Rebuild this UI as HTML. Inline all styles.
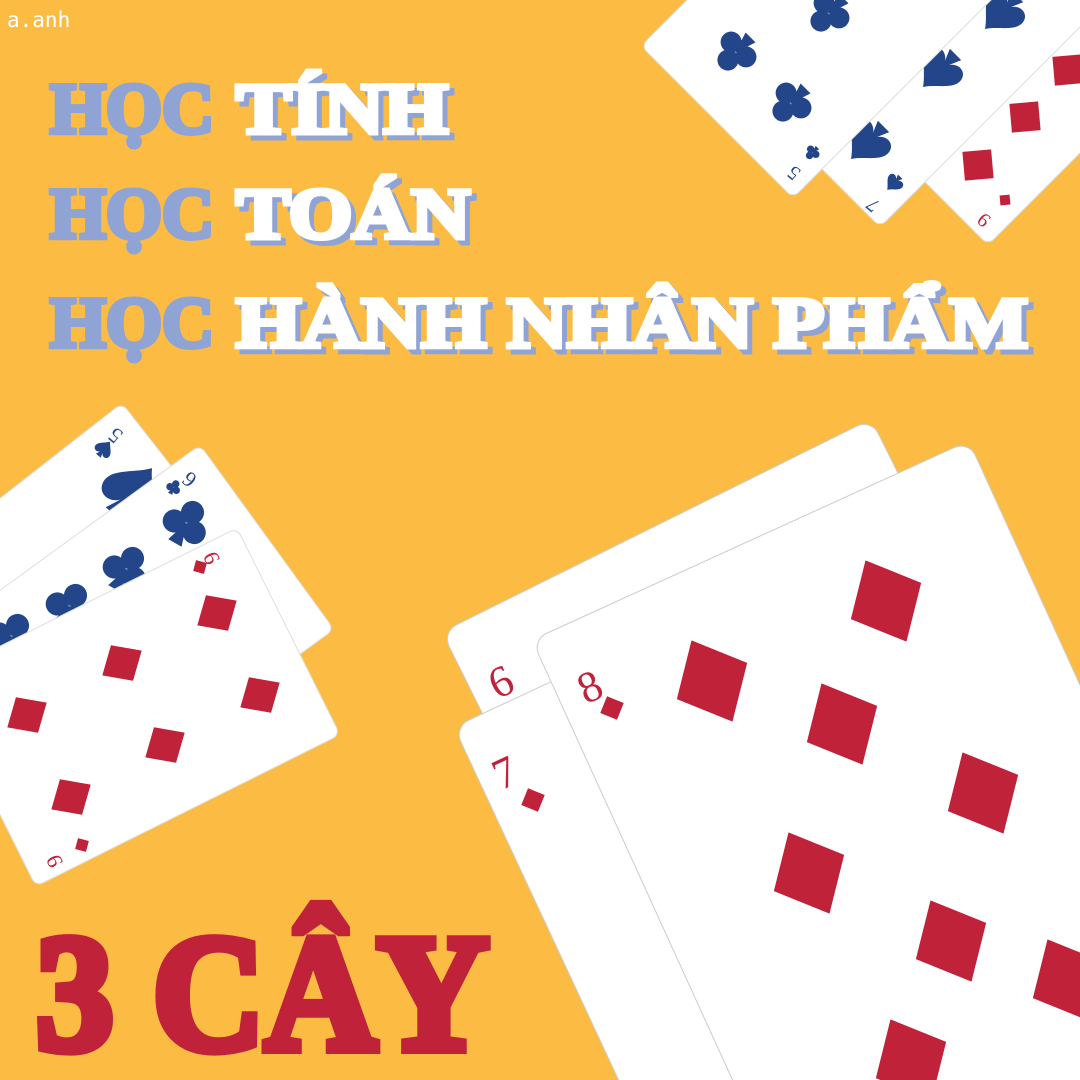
<!DOCTYPE html>
<html><head><meta charset="utf-8"><style>
html,body{margin:0;padding:0;background:#fcbc44;width:1080px;height:1080px;overflow:hidden;}
svg{display:block}
</style></head><body>
<svg width="1080" height="1080" viewBox="0 0 1080 1080" xmlns="http://www.w3.org/2000/svg" overflow="hidden">
<defs>
<clipPath id="cp"><rect width="1080" height="1080"/></clipPath>
<g id="club"><circle cx="0" cy="-10" r="10.5"/><circle cx="-10.5" cy="5" r="10.5"/><circle cx="10.5" cy="5" r="10.5"/><path d="M0,0 L-7,22 L7,22 Z"/></g>
<path id="spade" d="M0,-24 C8,-12 24,-4 22,8 C20,18 8,18 3,10 L8,22 L-8,22 L-3,10 C-8,18 -20,18 -22,8 C-24,-4 -8,-12 0,-24 Z"/>
<rect id="dia" x="-20" y="-20" width="40" height="40"/>
</defs>
<g clip-path="url(#cp)">
<rect width="1080" height="1080" fill="#fcbc44"/>

<rect transform="translate(988,245) rotate(-135)" width="215" height="340" rx="8" fill="#fff" stroke="#ddd"/>
<g fill="#c0223a">
<use href="#dia" transform="translate(1068,70) rotate(-5) scale(0.72)"/>
<use href="#dia" transform="translate(1025,117) rotate(-5) scale(0.72)"/>
<use href="#dia" transform="translate(978,165) rotate(-5) scale(0.72)"/>
<use href="#dia" transform="translate(1005,200) rotate(-5) scale(0.25)"/>
<text font-family="Liberation Serif" font-size="20" transform="translate(988,215) rotate(-140)" text-anchor="middle">9</text>
</g>
<rect transform="translate(880,227) rotate(-135)" width="215" height="340" rx="8" fill="#fff" stroke="#ddd"/>
<g fill="#23468a">
<use href="#spade" transform="translate(940,70) rotate(-135)"/>
<use href="#spade" transform="translate(868,142) rotate(-135)"/>
<use href="#spade" transform="translate(1002,12) rotate(-135)"/>
<use href="#spade" transform="translate(894,183) rotate(-135) scale(0.4)"/>
<text font-family="Liberation Serif" font-size="20" transform="translate(877,200) rotate(-140)" text-anchor="middle">7</text>
</g>
<rect transform="translate(793,198) rotate(-135)" width="215" height="340" rx="8" fill="#fff" stroke="#ddd"/>
<g fill="#23468a">
<use href="#club" transform="translate(735,53) rotate(-135)"/>
<use href="#club" transform="translate(790,104) rotate(-135)"/>
<use href="#club" transform="translate(828,14) rotate(-135)"/>
<use href="#club" transform="translate(812,153) rotate(-135) scale(0.35)"/>
<text font-family="Liberation Serif" font-size="20" transform="translate(798,168) rotate(-140)" text-anchor="middle">5</text>
</g>

<rect transform="translate(122,403) rotate(52)" width="230" height="340" rx="8" fill="#fff" stroke="#ddd"/>
<g fill="#23468a">
<use href="#spade" transform="translate(132,492) rotate(40) scale(1.3)"/>
<use href="#spade" transform="translate(104,449) rotate(40) scale(0.4)"/>
<text font-family="Liberation Serif" font-size="22" transform="translate(120,430) rotate(-140)" text-anchor="middle">5</text>
</g>
<rect transform="translate(200,445) rotate(54)" width="228" height="340" rx="8" fill="#fff" stroke="#ddd"/>
<g fill="#23468a">
<use href="#club" transform="translate(187,522) rotate(30) scale(1.1)"/>
<use href="#club" transform="translate(127,568) rotate(30) scale(1.1)"/>
<use href="#club" transform="translate(70,605) rotate(30) scale(1.1)"/>
<use href="#club" transform="translate(12,635) rotate(30) scale(1.1)"/>
<use href="#club" transform="translate(174,487) rotate(30) scale(0.35)"/>
<text font-family="Liberation Serif" font-size="22" transform="translate(194,474) rotate(-140)" text-anchor="middle">6</text>
</g>
<rect transform="translate(237,528) rotate(63.5)" width="231" height="340" rx="8" fill="#fff" stroke="#ddd"/>
<g fill="#c0223a">
<use href="#dia" transform="translate(217,613) rotate(10) skewX(-6) scale(0.78)"/>
<use href="#dia" transform="translate(122,663) rotate(10) skewX(-6) scale(0.78)"/>
<use href="#dia" transform="translate(260,695) rotate(10) skewX(-6) scale(0.78)"/>
<use href="#dia" transform="translate(27,715) rotate(10) skewX(-6) scale(0.78)"/>
<use href="#dia" transform="translate(165,745) rotate(10) skewX(-6) scale(0.78)"/>
<use href="#dia" transform="translate(71,797) rotate(10) skewX(-6) scale(0.78)"/>
<use href="#dia" transform="translate(200,567) rotate(15) scale(0.28)"/>
<use href="#dia" transform="translate(82,845) rotate(15) scale(0.28)"/>
<text font-family="Liberation Serif" font-size="22" transform="translate(218,555) rotate(-115)" text-anchor="middle">9</text>
<text font-family="Liberation Serif" font-size="22" transform="translate(61,858) rotate(-115)" text-anchor="middle">9</text>
</g>

<rect transform="translate(442,632) rotate(-26.4)" width="479" height="700" rx="16" fill="#fff" stroke="#ccc"/>
<text font-family="Liberation Serif" font-size="44" fill="#c0223a" transform="translate(507,695) rotate(-25)" text-anchor="middle">6</text>
<rect transform="translate(454,727) rotate(-25)" width="480" height="700" rx="16" fill="#fff" stroke="#ccc"/>
<g fill="#c0223a">
<text font-family="Liberation Serif" font-size="44" transform="translate(511,786) rotate(-25)" text-anchor="middle">7</text>
<use href="#dia" transform="translate(533,800) rotate(22) scale(0.45)"/>
</g>
<rect transform="translate(532,640) rotate(-24.5)" width="480" height="700" rx="16" fill="#fff" stroke="#ccc"/>
<g fill="#c0223a">
<text font-family="Liberation Serif" font-size="44" transform="translate(596,700) rotate(-25)" text-anchor="middle">8</text>
<use href="#dia" transform="translate(612,708) rotate(22) scale(0.45)"/>
<use href="#dia" transform="translate(886,601) rotate(22) skewX(8) scale(1.5)"/>
<use href="#dia" transform="translate(712,681) rotate(22) skewX(8) scale(1.5)"/>
<use href="#dia" transform="translate(842,724) rotate(22) skewX(8) scale(1.5)"/>
<use href="#dia" transform="translate(983,793) rotate(22) skewX(8) scale(1.5)"/>
<use href="#dia" transform="translate(809,873) rotate(22) skewX(8) scale(1.5)"/>
<use href="#dia" transform="translate(951,941) rotate(22) skewX(8) scale(1.5)"/>
<use href="#dia" transform="translate(1068,980) rotate(22) skewX(8) scale(1.5)"/>
<use href="#dia" transform="translate(911,1060) rotate(22) skewX(8) scale(1.5)"/>
</g>

<text x="7" y="27" font-family="DejaVu Sans Mono, Liberation Mono, monospace" font-size="21" fill="#fff">a.anh</text>
<g font-family="Liberation Serif" font-weight="bold" font-size="72" stroke-width="5" stroke-linejoin="miter">
<g fill="#8fa4d4" stroke="#8fa4d4">
<text x="50" y="133" textLength="164" lengthAdjust="spacingAndGlyphs">HỌC</text>
<text x="50" y="238" textLength="164" lengthAdjust="spacingAndGlyphs">HỌC</text>
<text x="50" y="347" textLength="164" lengthAdjust="spacingAndGlyphs">HỌC</text>
<text x="241" y="138" textLength="212" lengthAdjust="spacingAndGlyphs">TÍNH</text>
<text x="241" y="243" textLength="234" lengthAdjust="spacingAndGlyphs">TOÁN</text>
<text x="241" y="352" textLength="792" lengthAdjust="spacingAndGlyphs">HÀNH NHÂN PHẨM</text>
</g>
<g fill="#fff" stroke="#fff">
<text x="236" y="133" textLength="212" lengthAdjust="spacingAndGlyphs">TÍNH</text>
<text x="236" y="238" textLength="234" lengthAdjust="spacingAndGlyphs">TOÁN</text>
<text x="236" y="347" textLength="792" lengthAdjust="spacingAndGlyphs">HÀNH NHÂN PHẨM</text>
</g>
</g>
<text x="36" y="1049" font-family="Liberation Serif" font-weight="bold" font-size="166" fill="#c0223a" stroke="#c0223a" stroke-width="10" stroke-linejoin="miter" textLength="453" lengthAdjust="spacingAndGlyphs">3 CÂY</text>
</g>
</svg>
</body></html>
